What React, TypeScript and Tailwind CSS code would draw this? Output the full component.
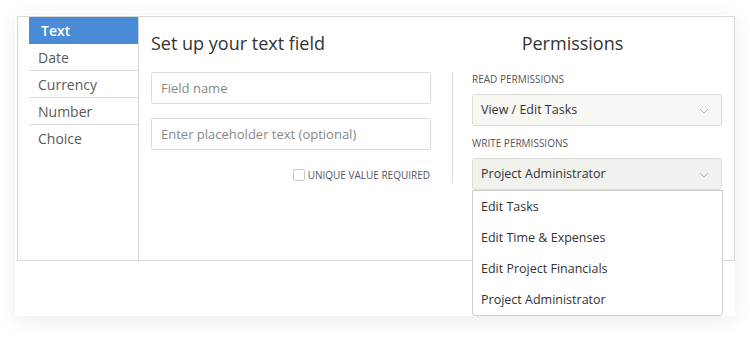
import { useState } from "react";

const fieldTypes = ["Text", "Date", "Currency", "Number", "Choice"];
const writeOptions = ["Edit Tasks", "Edit Time & Expenses", "Edit Project Financials", "Project Administrator"];

function Chevron() {
  return (
    <svg width="10" height="6" viewBox="0 0 10 6" fill="none" className="shrink-0">
      <path d="M1 1l4 4 4-4" stroke="#b0b0b0" strokeWidth="1" />
    </svg>
  );
}

function Select({ value, active }: { value: string; active?: boolean }) {
  return (
    <div
      className={
        "flex h-[32px] w-[250px] items-center justify-between rounded-[3px] border border-[#dcdcd8] pl-[8px] pr-[12px] pt-[1px] text-[12.5px] text-[#333] " +
        (active ? "bg-[#f1f1ed]" : "bg-[#f8f7f3]")
      }
    >
      <span>{value}</span>
      <Chevron />
    </div>
  );
}

export default function App() {
  const [active] = useState("Text");

  return (
    <div className="h-[340px] w-[750px] bg-white pl-[15px] pt-[15px] font-['Open_Sans',sans-serif]">
      <div className="h-[301px] w-[720px] bg-white pl-[2px] pt-[1px] shadow-[0_4px_18px_rgba(0,0,0,0.08)]">
        <div className="flex h-[245px] w-[718px] border border-[#d8d8d8]">
          {/* field type list */}
          <div className="w-[121px] shrink-0 border-r border-[#d8d8d8] pl-[11px]">
            {fieldTypes.map((t, i) => (
              <div
                key={t}
                className={
                  "flex h-[27px] items-center text-[14px] " +
                  (i < fieldTypes.length - 1 ? "border-b " : "") +
                  (t === active
                    ? "border-[#4a8bd8] bg-[#4a8bd8] pl-[12px] font-semibold text-white"
                    : "border-[#dcdcdc] pl-[9px] text-[#5a5a5a]")
                }
              >
                {t}
              </div>
            ))}
          </div>

          {/* setup panel */}
          <div className="flex flex-1 pl-[12px]">
            <div className="w-[280px] shrink-0">
              <div className="mt-[14px] h-[24px] text-[18px] leading-[24px] text-[#333]">Set up your text field</div>
              <div className="mt-[17px] flex h-[32px] items-center rounded-[2px] border border-[#dddddd] pl-[9px] pt-[1px] text-[13px] text-[#888]">
                Field name
              </div>
              <div className="mt-[14px] flex h-[32px] items-center rounded-[2px] border border-[#dddddd] pl-[9px] pt-[1px] text-[13px] text-[#888]">
                Enter placeholder text (optional)
              </div>
              <div className="mt-[17px] flex h-[16px] items-center justify-end gap-[3px] pr-[1px]">
                <span className="h-[12px] w-[12px] rounded-[2px] border border-[#cccccc] bg-white" />
                <span className="text-[10px] text-[#555]">UNIQUE VALUE REQUIRED</span>
              </div>
            </div>

            <div className="ml-[21px] mt-[55px] h-[111px] border-l border-[#dddddd]" />

            <div className="relative ml-[19px] w-[251px]">
              <div className="mt-[14px] h-[24px] pr-[50px] text-center text-[18px] leading-[24px] text-[#333]">Permissions</div>
              <div className="mt-[16px] h-[16px] text-[10px] leading-[16px] text-[#555]">READ PERMISSIONS</div>
              <div className="mt-[7px]">
                <Select value="View / Edit Tasks" />
              </div>
              <div className="mt-[9px] h-[16px] text-[10px] leading-[16px] text-[#555]">WRITE PERMISSIONS</div>
              <div className="relative mt-[7px]">
                <Select value="Project Administrator" active />
                <div className="absolute left-0 top-[32px] z-10 w-[251px] rounded-b-[3px] border border-[#cfcfcf] bg-white">
                  {writeOptions.map((o) => (
                    <div key={o} className="flex h-[31px] items-center pl-[8px] pt-[2px] text-[12.5px] text-[#333]">
                      {o}
                    </div>
                  ))}
                </div>
              </div>
            </div>
          </div>
        </div>
      </div>
    </div>
  );
}
